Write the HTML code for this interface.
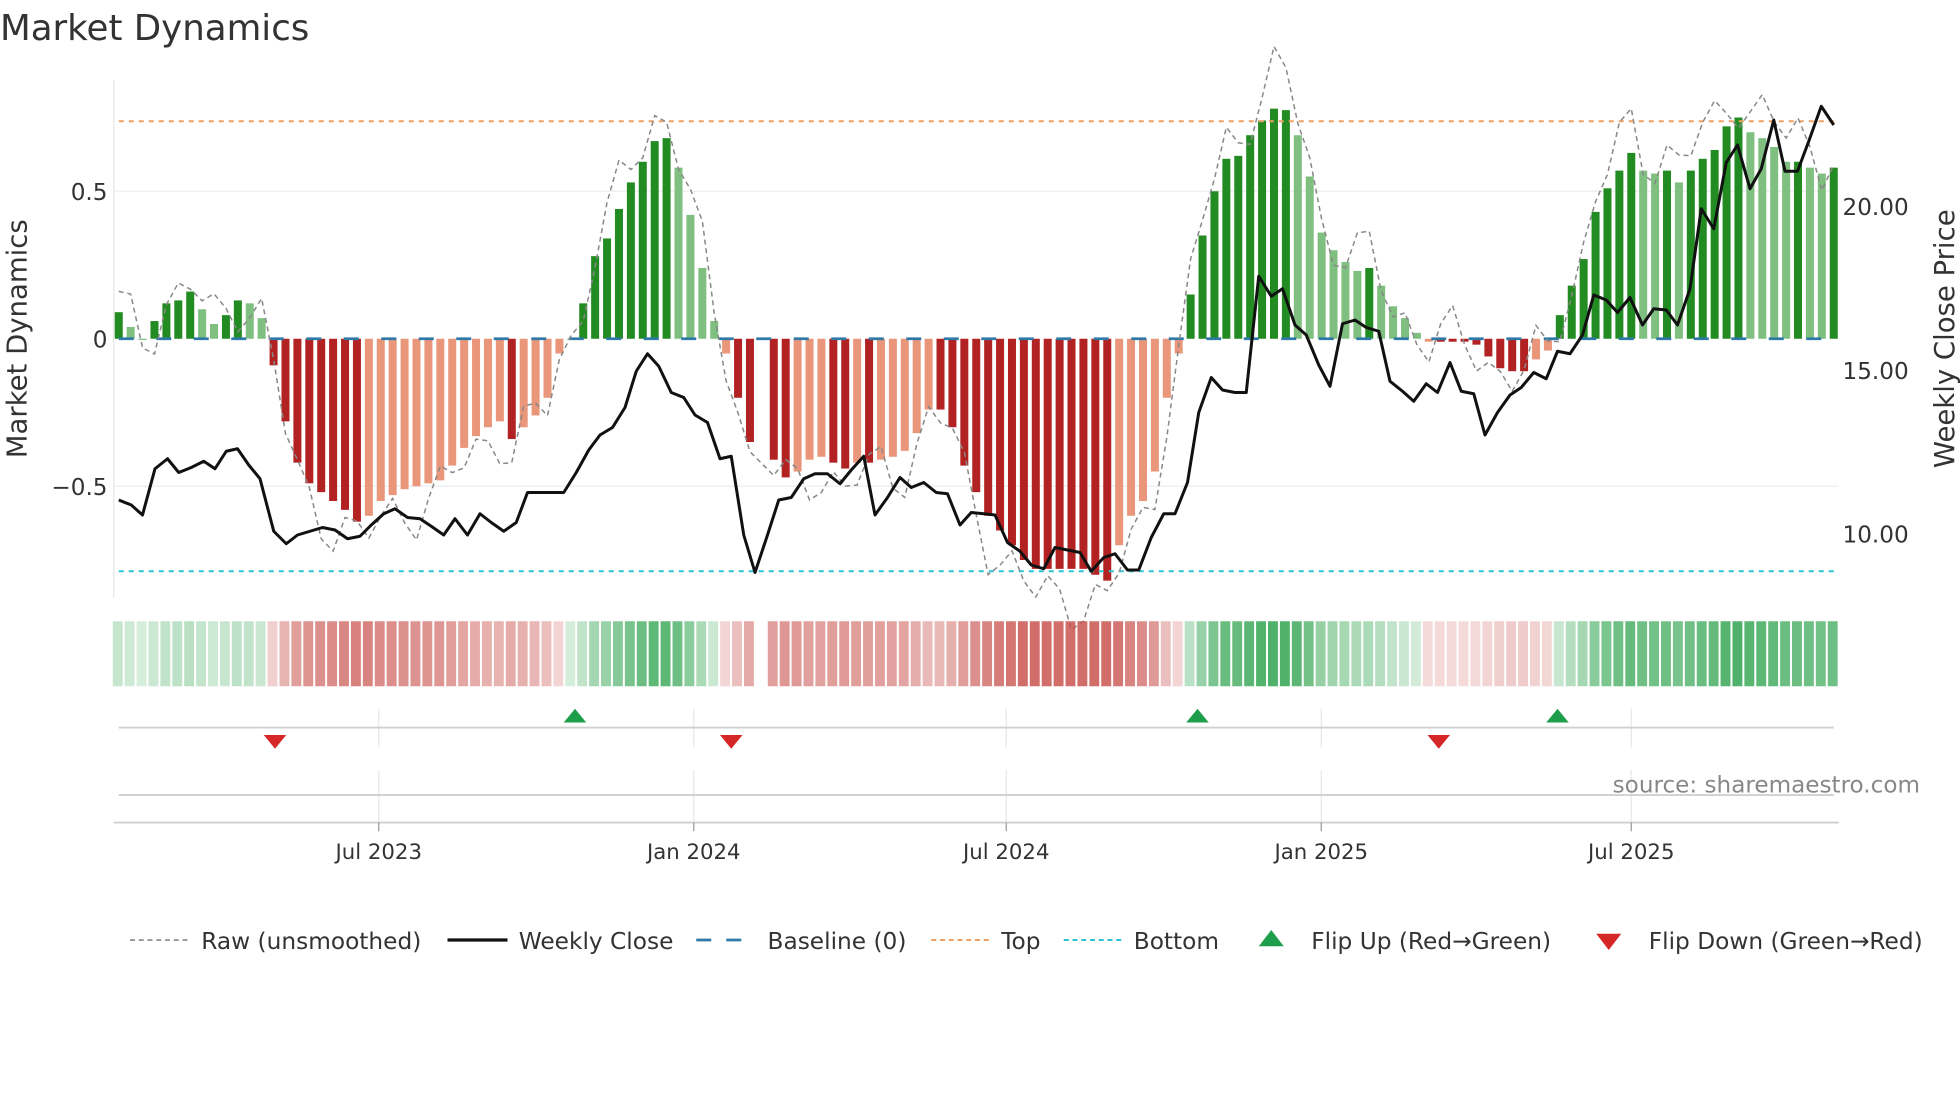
<!DOCTYPE html>
<html><head><meta charset="utf-8"><style>
html,body{margin:0;padding:0;background:#fff;width:1960px;height:1102px;overflow:hidden}
svg{display:block}
text{font-family:"DejaVu Sans","Liberation Sans",sans-serif;fill:#333}
</style></head><body>
<svg id="s" width="1960" height="1102" viewBox="0 0 1568 881.6" xmlns="http://www.w3.org/2000/svg">
<text x="0" y="32" font-size="28.5">Market Dynamics</text>
<line x1="91" y1="64" x2="91" y2="478" stroke="#e6e6e6" stroke-width="1"/>
<line x1="91" y1="153" x2="1471" y2="153" stroke="#eef0f2" stroke-width="1.2"/>
<line x1="91" y1="389" x2="1471" y2="389" stroke="#eef0f2" stroke-width="1.2"/>
<g id="bars"></g>
<line x1="95" y1="97" x2="1467" y2="97" stroke="#eda064" stroke-width="1.6" stroke-dasharray="4,4"/>
<line x1="95" y1="457" x2="1467" y2="457" stroke="#2bc4d6" stroke-width="1.6" stroke-dasharray="4,4"/>
<line x1="95" y1="271" x2="1467" y2="271" stroke="#2f79a8" stroke-width="2.2" stroke-dasharray="12,18"/>
<polyline id="raw" fill="none" stroke="#888" stroke-width="1.2" stroke-dasharray="4,3"/>
<polyline id="price" fill="none" stroke="#111" stroke-width="2.4" stroke-linejoin="round"/>
<g font-size="18.5">
<text x="86" y="160" text-anchor="end">0.5</text>
<text x="86" y="278" text-anchor="end">0</text>
<text x="86" y="396" text-anchor="end">−0.5</text>
<text x="1474" y="172">20.00</text>
<text x="1474" y="303">15.00</text>
<text x="1474" y="434">10.00</text>
</g>
<text font-size="22" transform="translate(21,271) rotate(-90)" text-anchor="middle">Market Dynamics</text>
<text font-size="22" transform="translate(1563,271) rotate(-90)" text-anchor="middle">Weekly Close Price</text>
<g id="heat"></g>
<g stroke="#e8e8e8" stroke-width="1">
<line x1="303" y1="567" x2="303" y2="598"/><line x1="555" y1="567" x2="555" y2="598"/><line x1="805" y1="567" x2="805" y2="598"/><line x1="1057" y1="567" x2="1057" y2="598"/><line x1="1305" y1="567" x2="1305" y2="598"/>
<line x1="303" y1="616" x2="303" y2="658"/><line x1="555" y1="616" x2="555" y2="658"/><line x1="805" y1="616" x2="805" y2="658"/><line x1="1057" y1="616" x2="1057" y2="658"/><line x1="1305" y1="616" x2="1305" y2="658"/>
</g>
<line x1="95" y1="582" x2="1467" y2="582" stroke="#d0d0d0" stroke-width="1.5"/>
<line x1="95" y1="636" x2="1467" y2="636" stroke="#d0d0d0" stroke-width="1.5"/>
<line x1="91" y1="658" x2="1471" y2="658" stroke="#cfcfcf" stroke-width="1.5"/>
<g stroke="#999" stroke-width="1"><line x1="303" y1="658" x2="303" y2="665"/><line x1="555" y1="658" x2="555" y2="665"/><line x1="805" y1="658" x2="805" y2="665"/><line x1="1057" y1="658" x2="1057" y2="665"/><line x1="1305" y1="658" x2="1305" y2="665"/></g>
<g fill="#1e9e4a">
<polygon points="451,578 469,578 460,567"/><polygon points="949,578 967,578 958,567"/><polygon points="1237,578 1255,578 1246,567"/>
</g>
<g fill="#d62728">
<polygon points="211,588 229,588 220,599"/><polygon points="576,588 594,588 585,599"/><polygon points="1142,588 1160,588 1151,599"/>
</g>
<text x="1536" y="634" font-size="18.5" text-anchor="end" style="fill:#888">source: sharemaestro.com</text>
<g font-size="17" text-anchor="middle">
<text x="303" y="687">Jul 2023</text><text x="555" y="687">Jan 2024</text><text x="805" y="687">Jul 2024</text><text x="1057" y="687">Jan 2025</text><text x="1305" y="687">Jul 2025</text>
</g>
<g font-size="18.6">
<line x1="104" y1="752" x2="150" y2="752" stroke="#888" stroke-width="1.3" stroke-dasharray="4,3"/>
<text x="161" y="759">Raw (unsmoothed)</text>
<line x1="358" y1="752" x2="406" y2="752" stroke="#111" stroke-width="2.6"/>
<text x="415" y="759">Weekly Close</text>
<line x1="557" y1="752" x2="603" y2="752" stroke="#2f79a8" stroke-width="2.2" stroke-dasharray="12,12"/>
<text x="614" y="759">Baseline (0)</text>
<line x1="745" y1="752" x2="791" y2="752" stroke="#eda064" stroke-width="1.6" stroke-dasharray="4,3"/>
<text x="801" y="759">Top</text>
<line x1="851" y1="752" x2="897" y2="752" stroke="#2bc4d6" stroke-width="1.6" stroke-dasharray="4,3"/>
<text x="907" y="759">Bottom</text>
<polygon points="1007,757 1027,757 1017,744" fill="#1e9e4a"/>
<text x="1049" y="759">Flip Up (Red→Green)</text>
<polygon points="1277,747 1297,747 1287,760" fill="#d62728"/>
<text x="1319" y="759">Flip Down (Green→Red)</text>
</g>
</svg>
<script>
var V=[0.09,0.04,0,0.06,0.12,0.13,0.16,0.1,0.05,0.08,0.13,0.12,0.07,
-0.09,-0.28,-0.42,-0.49,-0.52,-0.55,-0.58,-0.62,-0.6,-0.55,-0.53,-0.51,-0.5,-0.49,-0.48,-0.43,-0.37,-0.33,-0.3,-0.28,-0.34,-0.3,-0.26,-0.2,-0.05,
0,0.12,0.28,0.34,0.44,0.53,0.6,0.67,0.68,0.58,0.42,0.24,0.06,
-0.05,-0.2,-0.35,null,-0.41,-0.47,-0.45,-0.41,-0.4,-0.42,-0.44,-0.42,-0.42,-0.41,-0.4,-0.38,-0.32,-0.24,
-0.24,-0.3,-0.43,-0.52,-0.6,-0.65,-0.7,-0.75,-0.78,-0.78,-0.78,-0.78,-0.78,-0.8,-0.82,-0.7,-0.6,-0.55,-0.45,-0.2,-0.05,
0.15,0.35,0.5,0.61,0.62,0.69,0.74,0.78,0.775,0.69,0.55,0.36,0.30,0.26,0.23,0.24,0.18,0.11,0.07,0.02,
-0.01,-0.01,-0.01,-0.01,-0.02,-0.06,-0.1,-0.11,-0.11,-0.07,-0.04,
0.08,0.18,0.27,0.43,0.51,0.57,0.63,0.57,0.56,0.57,0.53,0.57,0.61,0.64,0.72,0.75,0.7,0.68,0.65,0.6,0.6,0.58,0.56,0.58];
var NS="http://www.w3.org/2000/svg";
function el(t,a,p){var e=document.createElementNS(NS,t);for(var k in a)e.setAttribute(k,a[k]);p.appendChild(e);return e;}
var bars=document.getElementById('bars'),heat=document.getElementById('heat');
var raw=[],prev=0,N=V.length,sp=(1467-95)/(N-1);
for(var i=0;i<N;i++){
 var v=V[i],x=95+i*sp;
 if(v===null){continue;}
 var rising=Math.abs(v)>=Math.abs(prev)-0.005;
 var c;
 if(v>=0)c=rising?'#228b22':'#7fbf7f';else c=rising?'#b22222':'#e9967a';
 var y0=271,y1=271-v*236;
 el('rect',{x:x-3.2,y:Math.min(y0,y1),width:6.4,height:Math.max(1,Math.abs(y1-y0)),fill:c},bars);
 var m=Math.min(1,Math.abs(v)/0.75),a=0.22+0.7*m;
 var hc=v>=0.0?'rgba(65,171,93,'+a+')':'rgba(200,80,75,'+(a*0.9)+')';
 el('rect',{x:x-4.8,y:497,width:sp-1.6,height:52,fill:hc},heat);
 var jit=Math.sin(i*1.7)*0.07+Math.cos(i*0.9)*0.06;
 raw.push(x.toFixed(1)+','+(271-(v*1.12+jit)*236).toFixed(1));
 prev=v;
}
document.getElementById('raw').setAttribute('points',raw.join(' '));
document.getElementById('price').setAttribute('points',"95,400 105,404 114,412 124,375 134,367 143,378 153,374 163,369 172,375 181,361 190,359 199,372 208,383 219,425 229,435 238,428 248,425 258,422 268,424 278,431 288,429 297,420 307,411 316,407 326,414 336,415 345,421 355,428 364,415 374,428 384,411 393,418 403,425 413,418 422,394 432,394 442,394 451,394 461,378 471,360 480,348 490,342 500,326 509,297 518,283 527,293 537,314 547,318 556,332 566,338 576,367 585,365 595,428 604,458 614,428 623,400 633,398 643,383 652,379 662,379 672,387 681,376 691,365 700,412 710,398 720,382 729,390 739,386 749,394 758,395 768,420 777,410 787,411 796,412 806,434 816,441 825,452 835,455 844,438 854,440 864,442 873,457 883,446 892,443 902,456 911,456 921,430 931,411 940,411 950,386 959,330 969,302 978,312 988,314 997,314 1007,221 1017,237 1026,231 1036,260 1045,268 1055,292 1064,309 1074,259 1084,256 1093,262 1103,265 1112,305 1122,313 1131,321 1141,307 1150,314 1160,290 1169,313 1179,315 1188,348 1198,330 1208,316 1217,310 1227,298 1237,303 1246,281 1256,283 1266,268 1275,236 1285,240 1294,250 1304,238 1314,260 1323,247 1333,248 1342,260 1352,231 1361,167 1371,183 1381,130 1390,116 1400,151 1409,135 1419,96 1428,137 1438,137 1447,113 1457,85 1467,100");
</script>
</body></html>
